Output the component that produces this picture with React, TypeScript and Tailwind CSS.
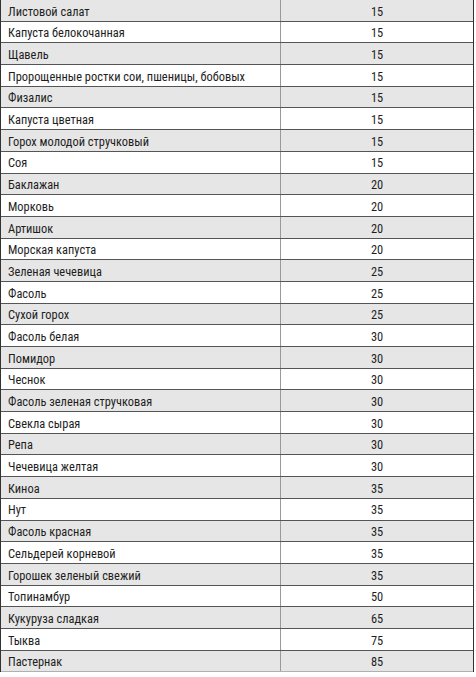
import React from "react";

const rows: [string, number][] = [
  ["Листовой салат", 15],
  ["Капуста белокочанная", 15],
  ["Щавель", 15],
  ["Пророщенные ростки сои, пшеницы, бобовых", 15],
  ["Физалис", 15],
  ["Капуста цветная", 15],
  ["Горох молодой стручковый", 15],
  ["Соя", 15],
  ["Баклажан", 20],
  ["Морковь", 20],
  ["Артишок", 20],
  ["Морская капуста", 20],
  ["Зеленая чечевица", 25],
  ["Фасоль", 25],
  ["Сухой горох", 25],
  ["Фасоль белая", 30],
  ["Помидор", 30],
  ["Чеснок", 30],
  ["Фасоль зеленая стручковая", 30],
  ["Свекла сырая", 30],
  ["Репа", 30],
  ["Чечевица желтая", 30],
  ["Киноа", 35],
  ["Нут", 35],
  ["Фасоль красная", 35],
  ["Сельдерей корневой", 35],
  ["Горошек зеленый свежий", 35],
  ["Топинамбур", 50],
  ["Кукуруза сладкая", 65],
  ["Тыква", 75],
  ["Пастернак", 85],
];

export default function App() {
  return (
    <div className="w-[476px] h-[677px] bg-white">
      <div
        className="w-[474px] border-l border-r border-[#333] text-[12.4px] text-[#1e1e1e]"
        style={{ fontFamily: '"Liberation Sans Narrow", "Roboto Condensed", "Liberation Sans", sans-serif' }}
      >
        {rows.map(([name, val], i) => (
          <div
            key={i}
            className={`flex h-[21.7px] border-b ${i % 2 === 0 ? "bg-[#e6e6e6]" : "bg-white"} ${i === rows.length - 1 ? "border-[#b0b0b0]" : "border-[#555]"}`}
          >
            <div className="w-[280px] pl-[7px] pt-[3px] flex items-center border-r border-[#999] leading-none">
              {name}
            </div>
            <div className="flex-1 pt-[3px] flex items-center justify-center leading-none">{val}</div>
          </div>
        ))}
      </div>
    </div>
  );
}
